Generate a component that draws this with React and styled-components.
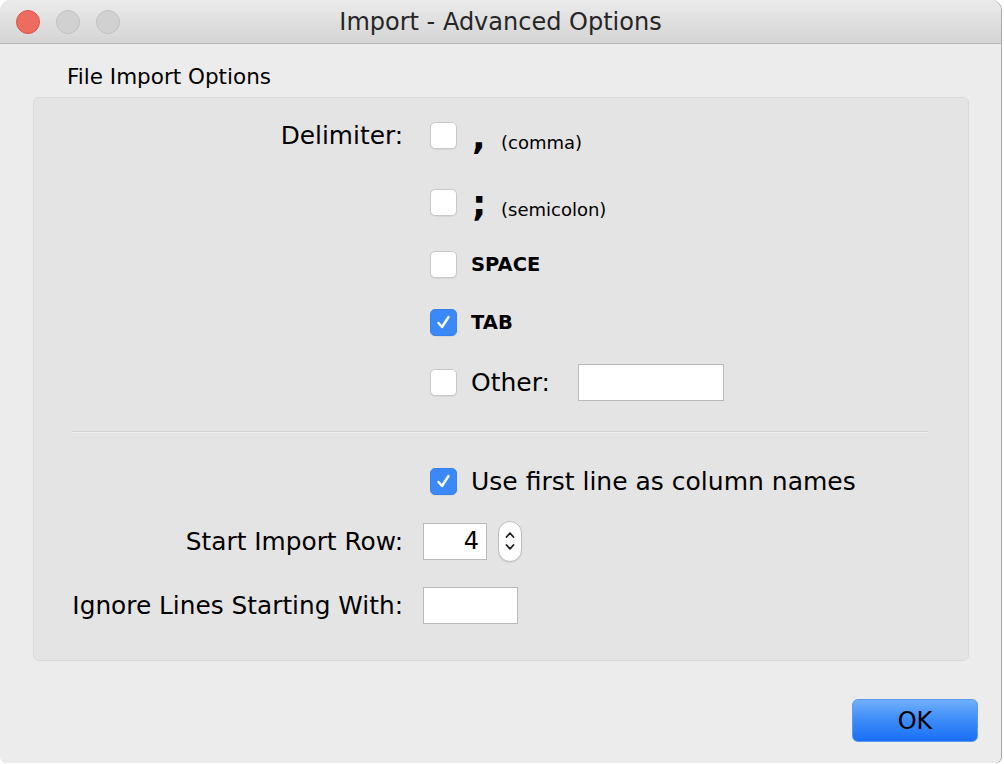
import React from 'react';
import styled, { createGlobalStyle } from 'styled-components';

const GlobalStyle = createGlobalStyle`
  html, body {
    margin: 0;
    padding: 0;
    background: #ffffff;
  }
  body {
    font-family: "DejaVu Sans", "Liberation Sans", sans-serif;
    color: #000;
  }
`;

const Window = styled.div`
  width: 1001px;
  height: 763px;
  background: #ececec;
  border-radius: 10px 10px 6px 6px;
  box-shadow: 1px 0 0 #a8a8a8;
  overflow: hidden;
  display: flex;
  flex-direction: column;
`;

const TitleBar = styled.div`
  height: 43px;
  flex-shrink: 0;
  background: linear-gradient(#ebebeb, #d4d4d4);
  border-bottom: 1px solid #b4b4b4;
  display: flex;
  align-items: center;
  position: relative;
`;

const Lights = styled.div`
  display: flex;
  gap: 16px;
  padding-left: 16px;
`;

const Light = styled.span`
  width: 24px;
  height: 24px;
  border-radius: 50%;
  box-sizing: border-box;
  background: ${(p) => (p.red ? '#ee6b5f' : '#d1d1d1')};
  border: 1px solid ${(p) => (p.red ? '#d9574c' : '#c0c0c0')};
`;

const Title = styled.div`
  position: absolute;
  left: 0;
  right: 0;
  text-align: center;
  font-size: 24px;
  color: #262626;
  pointer-events: none;
`;

const Body = styled.div`
  flex: 1;
  display: flex;
  flex-direction: column;
  padding: 0 32px 0 33px;
`;

const SectionTitle = styled.div`
  font-size: 21.5px;
  margin: 20px 0 0 34px;
  height: 33px;
  line-height: 26px;
`;

const Panel = styled.div`
  height: 564px;
  box-sizing: border-box;
  background: #e4e4e4;
  border: 1px solid #dadada;
  border-radius: 6px;
  padding-top: 4px;
  display: flex;
  flex-direction: column;
`;

const FormRow = styled.div`
  height: ${(p) => p.h}px;
  display: grid;
  grid-template-columns: 369px 1fr;
  column-gap: ${(p) => (p.tight ? 20 : 27)}px;
  align-items: center;
`;

const Label = styled.div`
  text-align: right;
  font-size: 24.8px;
`;

const Option = styled.div`
  display: flex;
  align-items: center;
`;

const Box = styled.span`
  width: 27px;
  height: 27px;
  box-sizing: border-box;
  border-radius: 5px;
  flex-shrink: 0;
  display: flex;
  align-items: center;
  justify-content: center;
  background: ${(p) => (p.checked ? '#3a89f6' : '#ffffff')};
  border: 1px solid ${(p) => (p.checked ? '#3a82ea' : '#c8c8c8')};
  box-shadow: 0 1px 1px rgba(0, 0, 0, 0.06);
  margin-right: 14px;
`;

const PunctGroup = styled.span`
  display: flex;
  align-items: baseline;
  margin-top: 4px;
`;

const Punct = styled.span`
  font-size: 36px;
  font-weight: bold;
  width: 29px;
  line-height: 1;
  padding-left: 1px;
`;

const Small = styled.span`
  font-size: 18px;
`;

const OptionText = styled.span`
  font-size: ${(p) => (p.bold ? 19.5 : 25)}px;
  font-weight: ${(p) => (p.bold ? 'bold' : 'normal')};
`;

const TextField = styled.div`
  width: ${(p) => p.w}px;
  height: 37px;
  box-sizing: border-box;
  background: #fff;
  border: 1px solid #b9b9b9;
  margin-left: ${(p) => p.ml || 0}px;
  font-size: 24px;
  display: flex;
  align-items: center;
  justify-content: flex-end;
  padding-right: 7px;
`;

const Separator = styled.div`
  height: 39px;
  display: flex;
  align-items: center;
  padding: 0 40px 0 38px;
  &::before {
    content: '';
    flex: 1;
    height: 1px;
    background: #d2d2d2;
    box-shadow: 0 1px 0 #ececec;
  }
`;

const Stepper = styled.div`
  width: 24px;
  height: 41px;
  box-sizing: border-box;
  border: 1px solid #bdbdbd;
  border-radius: 12px;
  background: #fff;
  margin-left: 11px;
  display: flex;
  align-items: center;
  justify-content: center;
  box-shadow: 0 1px 1px rgba(0, 0, 0, 0.08);
`;

const Footer = styled.div`
  flex: 1;
  display: flex;
  justify-content: flex-end;
  align-items: flex-start;
  padding-top: 38px;
  margin-right: -9px;
`;

const OkButton = styled.button`
  width: 126px;
  height: 43px;
  border-radius: 6px;
  border: 1px solid #5b9af2;
  background: linear-gradient(#71b0fb, #3f8ef8 45%, #1a6ff6);
  font-family: inherit;
  font-size: 24px;
  color: #000;
  padding: 0;
`;

const Check = () => (
  <svg width="17" height="17" viewBox="0 0 17 17" fill="none">
    <path d="M3.5 9l3.5 4 6.5-10" stroke="#fff" strokeWidth="2.4" strokeLinecap="round" strokeLinejoin="round" />
  </svg>
);

const Chevrons = () => (
  <svg width="12" height="28" viewBox="0 0 12 28" fill="none">
    <path d="M2.5 10L6 6.2 9.5 10" stroke="#222" strokeWidth="1.8" strokeLinecap="round" strokeLinejoin="round" />
    <path d="M2.5 18L6 21.8 9.5 18" stroke="#222" strokeWidth="1.8" strokeLinecap="round" strokeLinejoin="round" />
  </svg>
);

const CheckBox = ({ checked }) => <Box checked={checked}>{checked && <Check />}</Box>;

export default function App() {
  return (
    <>
      <GlobalStyle />
      <Window>
        <TitleBar>
          <Lights>
            <Light red />
            <Light />
            <Light />
          </Lights>
          <Title>Import - Advanced Options</Title>
        </TitleBar>
        <Body>
          <SectionTitle>File Import Options</SectionTitle>
          <Panel>
            <FormRow h={66}>
              <Label>Delimiter:</Label>
              <Option>
                <CheckBox />
                <PunctGroup>
                  <Punct>,</Punct>
                  <Small>(comma)</Small>
                </PunctGroup>
              </Option>
            </FormRow>
            <FormRow h={68}>
              <span />
              <Option>
                <CheckBox />
                <PunctGroup>
                  <Punct>;</Punct>
                  <Small>(semicolon)</Small>
                </PunctGroup>
              </Option>
            </FormRow>
            <FormRow h={56}>
              <span />
              <Option>
                <CheckBox />
                <OptionText bold>SPACE</OptionText>
              </Option>
            </FormRow>
            <FormRow h={60}>
              <span />
              <Option>
                <CheckBox checked />
                <OptionText bold>TAB</OptionText>
              </Option>
            </FormRow>
            <FormRow h={60}>
              <span />
              <Option>
                <CheckBox />
                <OptionText>Other:</OptionText>
                <TextField w={146} ml={28} />
              </Option>
            </FormRow>
            <Separator />
            <FormRow h={60}>
              <span />
              <Option>
                <CheckBox checked />
                <OptionText>Use first line as column names</OptionText>
              </Option>
            </FormRow>
            <FormRow h={60} tight>
              <Label>Start Import Row:</Label>
              <Option>
                <TextField w={64}>4</TextField>
                <Stepper>
                  <Chevrons />
                </Stepper>
              </Option>
            </FormRow>
            <FormRow h={68} tight>
              <Label>Ignore Lines Starting With:</Label>
              <Option>
                <TextField w={95} />
              </Option>
            </FormRow>
          </Panel>
          <Footer>
            <OkButton>OK</OkButton>
          </Footer>
        </Body>
      </Window>
    </>
  );
}
